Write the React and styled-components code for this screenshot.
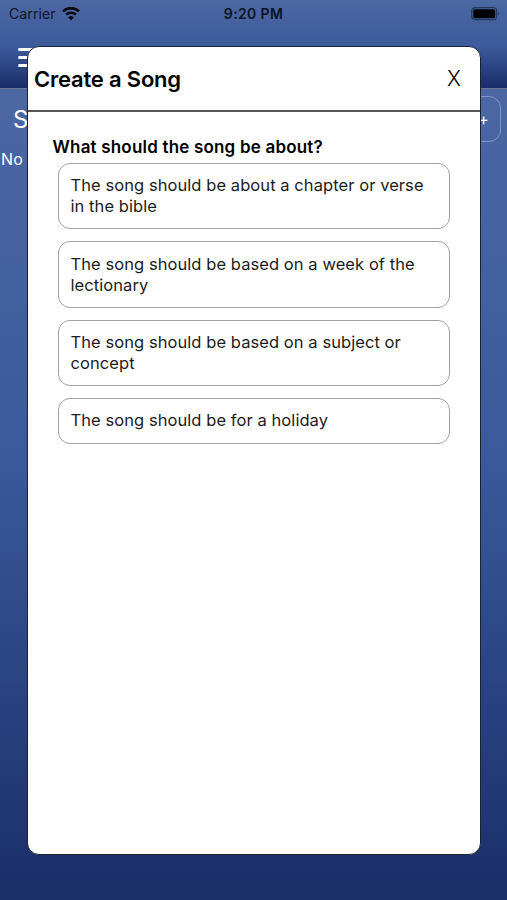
import React from "react";
import styled, { createGlobalStyle } from "styled-components";

const GlobalStyle = createGlobalStyle`
  * {
    box-sizing: border-box;
  }

  body {
    margin: 0;
    font-family: Inter, "Liberation Sans", sans-serif;
  }

  button {
    font: inherit;
    background: none;
    cursor: pointer;
  }
`;

const Screen = styled.div`
  position: relative;
  height: 900px;
  overflow: hidden;
  display: flex;
  flex-direction: column;
`;

const Header = styled.header`
  flex: 0 0 89px;
  border-bottom: 1px solid #6b7694;
  background: linear-gradient(#4c67a2, #3d5b9b 52%, #1a2d68);
`;

const StatusBar = styled.div`
  height: 27px;
  padding: 0 7px 0 9px;
  display: grid;
  grid-template-columns: 1fr auto 1fr;
  align-items: center;
  font-size: 14px;
  color: #0c1324;
`;

const Carrier = styled.div`
  display: flex;
  align-items: center;
  gap: 6px;
  letter-spacing: 0.12px;
`;

const Time = styled.div`
  margin-right: 2px;
  font-weight: 600;
  letter-spacing: 0.35px;
`;

const Battery = styled.svg`
  justify-self: end;
`;

const MenuIcon = styled.div`
  width: 24px;
  margin: 20.5px 0 0 18px;
  display: flex;
  flex-direction: column;
  gap: 5px;
`;

const MenuBar = styled.span`
  height: 3px;
  border-radius: 2px;
  background: #fff;
`;

const Page = styled.main`
  flex: 1;
  color: #fff;
  background: linear-gradient(#4c67a2, #3b5a9b 45%, #1a2e68);
`;

const PageTitle = styled.div`
  padding: 7px 6px 0 13px;
  display: flex;
  justify-content: space-between;
  font-size: 24px;
  line-height: 48px;
`;

const AddButton = styled.button`
  width: 46px;
  height: 46px;
  padding: 0 0 0 11px;
  border: 1px solid #8296c4;
  border-radius: 12px;
  color: #fff;
  font-size: 16px;
  line-height: 40px;
`;

const Empty = styled.div`
  padding-left: 1px;
  font-size: 16px;
  line-height: 30px;
  letter-spacing: 0.1px;
`;

const Modal = styled.section`
  position: absolute;
  top: 46px;
  left: 26.5px;
  width: 454.5px;
  height: 809px;
  border: 1.5px solid #1b2233;
  border-radius: 12px;
  background: #fff;
  color: #000;
`;

const ModalHeader = styled.div`
  height: 65px;
  padding: 0 19px 0 6.5px;
  display: flex;
  align-items: center;
  justify-content: space-between;
  border-bottom: 2px solid #555;
`;

const Title = styled.h1`
  margin: 0;
  font-size: 22px;
  font-weight: 600;
  letter-spacing: -0.2px;
`;

const Close = styled.button`
  padding: 0;
  border: 0;
  color: #000;
  font-size: 21px;
  font-weight: 350;
`;

const ModalBody = styled.div`
  padding: 24.5px 30px 0;
`;

const Question = styled.h2`
  margin: 0 0 5.5px -5px;
  font-size: 17px;
  line-height: 21px;
  font-weight: 600;
  letter-spacing: 0.19px;
`;

const Options = styled.div`
  display: flex;
  flex-direction: column;
  gap: 12px;
`;

const Option = styled.button`
  padding: 11.2px 12px;
  border: 1px solid #a0a0a0;
  border-radius: 12px;
  color: #1c1c1c;
  font-size: 16.5px;
  line-height: 21px;
  letter-spacing: 0.07px;
  text-align: left;
`;

const options = [
  "The song should be about a chapter or verse in the bible",
  "The song should be based on a week of the lectionary",
  "The song should be based on a subject or concept",
  "The song should be for a holiday",
];

const WifiIcon = () => (
  <svg width="18" height="14" viewBox="0 0 18 14" fill="none">
    <path d="M1 4.4a11.4 11.4 0 0 1 16 0" stroke="#05070d" strokeWidth="2.7" />
    <path d="M4.1 7.7a7 7 0 0 1 9.8 0" stroke="#05070d" strokeWidth="2.4" />
    <path d="M6.2 10.4a4 4 0 0 1 5.6 0L9 13.3z" fill="#05070d" />
  </svg>
);

const BatteryIcon = () => (
  <Battery width="29" height="14" viewBox="0 0 29 14">
    <rect x="0.7" y="0.7" width="25" height="12" rx="3.5" fill="none" stroke="#27385f" strokeWidth="1.2" />
    <rect x="2.2" y="2.2" width="22" height="9" rx="1.8" fill="#000" />
    <path d="M26.8 4.7q2.2 2 0 4z" fill="#27385f" />
  </Battery>
);

const CreateSong = () => (
  <Modal>
    <ModalHeader>
      <Title>Create a Song</Title>
      <Close>X</Close>
    </ModalHeader>
    <ModalBody>
      <Question>What should the song be about?</Question>
      <Options>
        {options.map((option) => (
          <Option key={option}>{option}</Option>
        ))}
      </Options>
    </ModalBody>
  </Modal>
);

const App = () => (
  <>
    <GlobalStyle />
    <Screen>
      <Header>
        <StatusBar>
          <Carrier>
            Carrier
            <WifiIcon />
          </Carrier>
          <Time>9:20 PM</Time>
          <BatteryIcon />
        </StatusBar>
        <MenuIcon>
          <MenuBar />
          <MenuBar />
          <MenuBar />
        </MenuIcon>
      </Header>
      <Page>
        <PageTitle>
          S<AddButton>+</AddButton>
        </PageTitle>
        <Empty>No</Empty>
      </Page>
      <CreateSong />
    </Screen>
  </>
);

export default App;
